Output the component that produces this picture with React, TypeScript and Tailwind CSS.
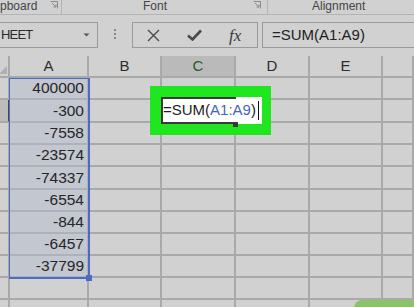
import React from "react";

const COLS = [
  { id: "A", w: "w-[79px]" },
  { id: "B", w: "w-[73px]" },
  { id: "C", w: "w-[74px]" },
  { id: "D", w: "w-[74px]" },
  { id: "E", w: "w-[73px]" },
  { id: "F", w: "w-[31px]" },
];

const VALUES = ["400000", "-300", "-7558", "-23574", "-74337", "-6554", "-844", "-6457", "-37799"];

const ROW_H = ["h-[22px]", "h-[23px]", "h-[22px]", "h-[22px]", "h-[23px]", "h-[22px]", "h-[22px]", "h-[22px]", "h-[22px]", "h-[22px]", "h-[22px]"];

function Launcher() {
  return (
    <svg width="8" height="8" viewBox="0 0 8 8" className="mt-[1px]">
      <path d="M0.5 0.5h7v7" fill="none" stroke="#8a8a8a" strokeWidth="1" />
      <path d="M2 2l4 4M6 3.5V6H3.5" fill="none" stroke="#8a8a8a" strokeWidth="1" />
    </svg>
  );
}

export default function App() {
  return (
    <div className="relative w-[414px] h-[307px] overflow-hidden bg-[#d1d1d1] font-['Liberation_Sans',Arial,sans-serif] text-[#262626]">
      {/* ribbon group labels */}
      <div className="flex h-[15px] border-b border-[#b4b4b4] text-[12px] leading-[13px] text-[#454545]">
        <div className="flex w-[62px] items-start gap-[13px] border-r border-[#b4b4b4]">
          <span>pboard</span>
          <Launcher />
        </div>
        <div className="flex w-[206px] items-start border-r border-[#b4b4b4]">
          <span className="ml-[81px]">Font</span>
          <span className="ml-[86px]"><Launcher /></span>
        </div>
        <div className="flex-1 pl-[44px]">Alignment</div>
      </div>

      {/* formula bar */}
      <div className="flex h-[41px] items-start pt-[7px]">
        <div className="flex h-[26px] w-[99px] -ml-[1px] items-center border border-[#9a9a9a]">
          <span className="ml-[1px] text-[13px] tracking-[-0.8px] text-[#2a2a2a]">HEET</span>
          <svg width="7" height="4" viewBox="0 0 7 4" className="ml-auto mr-[7px]">
            <path d="M0.5 0.5h6L3.5 3.5z" fill="#555" />
          </svg>
        </div>
        <div className="flex w-[34px] flex-col items-center gap-[2px] pt-[7px]">
          <span className="h-[2px] w-[2px] bg-[#8a8a8a]" />
          <span className="h-[2px] w-[2px] bg-[#8a8a8a]" />
          <span className="h-[2px] w-[2px] bg-[#8a8a8a]" />
        </div>
        <div className="flex h-[26px] w-[126px] items-center border border-[#9a9a9a]">
          <svg width="13" height="13" viewBox="0 0 13 13" className="ml-[14px]">
            <path d="M1 1l11 11M12 1L1 12" stroke="#4a4a4a" strokeWidth="1.4" fill="none" />
          </svg>
          <svg width="15" height="12" viewBox="0 0 15 12" className="ml-[27px]">
            <path d="M1 6.5l4.5 4L14 1.5" stroke="#4a4a4a" strokeWidth="2.6" fill="none" strokeLinejoin="miter" />
          </svg>
          <span className="ml-[27px] font-['Liberation_Serif',serif] text-[17px] italic leading-none text-[#3a3a3a]">
            fx
          </span>
        </div>
        <div className="ml-[4px] flex h-[26px] flex-1 items-center border border-r-0 border-[#9a9a9a] pl-[9px] text-[15px] text-[#222]">
          =SUM(A1:A9)
        </div>
      </div>

      {/* sheet grid */}
      <div className="flex">
        {/* row headers */}
        <div className="flex w-[10px] flex-col">
          <div className="relative h-[22px] border-b-2 border-r-2 border-[#a9a9a9]">
            <svg width="8" height="8" viewBox="0 0 8 8" className="absolute bottom-[2px] right-[1px]">
              <path d="M8 0V8H0z" fill="#b0b0b0" />
            </svg>
          </div>
          {ROW_H.map((h, i) => (
            <div
              key={i}
              className={`${h} border-b-2 border-r-2 ${
                i === 1 ? "border-r-[#4a4a4a] bg-[#bcbcbc] border-b-[#a9a9a9]" : "border-[#a9a9a9]"
              }`}
            />
          ))}
        </div>
        {COLS.map((c) => (
          <div key={c.id} className={`flex ${c.w} shrink-0 flex-col`}>
            <div
              className={`flex h-[22px] items-center justify-center border-b-2 border-r-2 border-[#a9a9a9] text-[15px] ${
                c.id === "C" ? "bg-[#bababa] text-[#1f5a32]" : "text-[#2e2e2e]"
              }`}
            >
              {c.id !== "F" ? c.id : ""}
            </div>
            {ROW_H.map((h, i) => {
              const inSel = c.id === "A" && i < 9;
              return (
                <div
                  key={i}
                  className={`${h} flex items-center justify-end border-b-2 border-r-2 pr-[3px] text-[15.5px] ${
                    inSel ? "bg-[#c3c7cf] border-[#aeb1b8]" : "border-[#a9a9a9]"
                  }`}
                >
                  {inSel ? VALUES[i] : ""}
                </div>
              );
            })}
          </div>
        ))}
      </div>

      {/* selection A1:A9 */}
      <div className="absolute left-[9px] top-[78px] h-[201px] w-[81px] border border-r-2 border-b-2 border-[#4d6ac4]">
        <span className="absolute -bottom-[4px] -right-[4px] h-[6px] w-[6px] bg-[#4d6ac4]" />
      </div>

      {/* editing cell with green highlight */}
      <div className="absolute left-[150px] top-[86px] h-[49px] w-[121px] bg-[#1fe61f] p-[11px] pr-[9px]">
        <div className="relative flex h-[27px] items-center bg-white pl-[2px] text-[15px] text-[#1c1c1c]">
          <span className="absolute left-0 top-0 h-full w-[75px] border-2 border-r-0 border-[#3a3a3a]" />
          <span className="absolute bottom-[-3px] left-[72px] h-[5px] w-[5px] bg-[#3a3a3a]" />
          <span className="relative">
            =SUM(<span className="text-[#3f66c2]">A1:A9</span>)
          </span>
          <span className="relative ml-[2px] h-[19px] w-[1px] bg-[#111]" />
        </div>
      </div>

      {/* corner badge */}
      <div className="absolute bottom-[-6px] right-0 h-[13px] w-[60px] rounded-tl-[8px] bg-[#8dc26c]" />
    </div>
  );
}
